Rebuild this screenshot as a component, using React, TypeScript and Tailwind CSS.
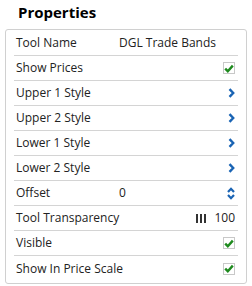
const font = { fontFamily: '"Open Sans", "Liberation Sans", sans-serif' };

function Check() {
  return (
    <span className="flex h-[12px] w-[12px] items-center justify-center border border-[#c8c8c8] bg-white">
      <svg width="10" height="9" viewBox="0 0 10 9">
        <path d="M1.2 4.6 L3.8 7.2 L8.8 1.6" fill="none" stroke="#1e8a1e" strokeWidth="2.4" />
      </svg>
    </span>
  );
}

function Chevron() {
  return (
    <svg width="7" height="10" viewBox="0 0 7 10">
      <path d="M1.5 1.2 L5.2 5 L1.5 8.8" fill="none" stroke="#1a64b4" strokeWidth="2.4" />
    </svg>
  );
}

function Stepper() {
  return (
    <svg width="8" height="13" viewBox="0 0 8 13">
      <path d="M1 5 L4 1.8 L7 5" fill="none" stroke="#1a64b4" strokeWidth="2.2" />
      <path d="M1 8 L4 11.2 L7 8" fill="none" stroke="#1a64b4" strokeWidth="2.2" />
    </svg>
  );
}

type Row = { label: string; value?: string; right?: React.ReactNode };

const rows: Row[] = [
  { label: 'Tool Name', value: 'DGL Trade Bands' },
  { label: 'Show Prices', right: <Check /> },
  { label: 'Upper 1 Style', right: <Chevron /> },
  { label: 'Upper 2 Style', right: <Chevron /> },
  { label: 'Lower 1 Style', right: <Chevron /> },
  { label: 'Lower 2 Style', right: <Chevron /> },
  { label: 'Offset', value: '0', right: <Stepper /> },
  {
    label: 'Tool Transparency',
    right: (
      <span className="flex items-center gap-[8px]">
        <span className="flex gap-[2px]">
          <span className="h-[9px] w-[2px] bg-[#333]" />
          <span className="h-[9px] w-[2px] bg-[#333]" />
          <span className="h-[9px] w-[2px] bg-[#333]" />
        </span>
        <span className="text-[12px] text-[#222]">100</span>
      </span>
    ),
  },
  { label: 'Visible', right: <Check /> },
  { label: 'Show In Price Scale', right: <Check /> },
];

export default function App() {
  return (
    <div className="h-[286px] w-[252px] bg-white text-[#222]" style={font}>
      <div className="pl-[18px] pt-[1px] text-[15px] font-bold leading-[22px] text-black">Properties</div>
      <div className="mx-[5px] mt-[6px] w-[242px] rounded-[3px] border border-[#d0d0d0] px-[8px] pb-[2px] pt-[1px]">
        {rows.map((r, i) => (
          <div
            key={r.label}
            className={`flex h-[25px] items-center px-[2px] text-[12px] whitespace-nowrap ${i < rows.length - 1 ? 'border-b border-[#d4d4d4]' : ''}`}
          >
            <span className="w-[103px] shrink-0 whitespace-nowrap">{r.label}</span>
            <span className="flex-1">{r.value}</span>
            {r.right && <span className="flex items-center pr-[1px]">{r.right}</span>}
          </div>
        ))}
      </div>
    </div>
  );
}
